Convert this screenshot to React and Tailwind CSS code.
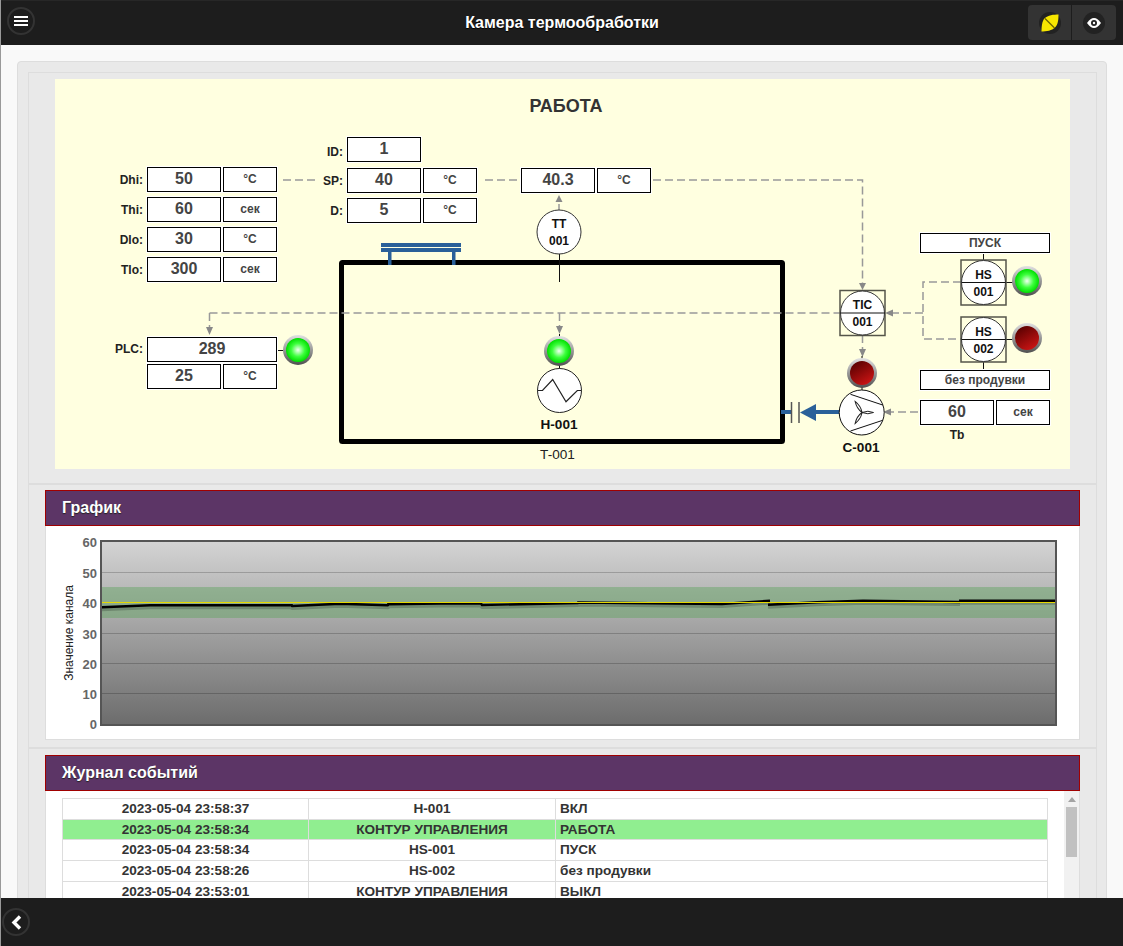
// App.jsx
import React from "react";

const EVENTS = [
  ["2023-05-04 23:58:37", "H-001", "ВКЛ", false],
  ["2023-05-04 23:58:34", "КОНТУР УПРАВЛЕНИЯ", "РАБОТА", true],
  ["2023-05-04 23:58:34", "HS-001", "ПУСК", false],
  ["2023-05-04 23:58:26", "HS-002", "без продувки", false],
  ["2023-05-04 23:53:01", "КОНТУР УПРАВЛЕНИЯ", "ВЫКЛ", false],
];

const Value = ({ children, className = "w-[74px]" }) => (
  <div className={`${className} h-[25px] shrink-0 bg-white border border-black shadow-[0_0_0_1px_#fff] flex items-center justify-center pb-[1px] text-[16px] font-bold text-[#444]`}>
    {children}
  </div>
);

const Unit = ({ children }) => (
  <div className="w-[54px] h-[25px] shrink-0 bg-white border border-black shadow-[0_0_0_1px_#fff] flex items-center justify-center pb-[1px] text-[12px] font-bold text-[#444]">
    {children}
  </div>
);

const Label = ({ children, className = "" }) => (
  <div className={`w-[40px] mr-[2px] text-right text-[12px] font-bold text-[#222] ${className}`}>{children}</div>
);

const Row = ({ label, value, unit, className = "", labelClass = "" }) => (
  <div className={`flex items-center gap-[2px] ${className}`}>
    <Label className={labelClass}>{label}</Label>
    <Value>{value}</Value>
    {unit && <Unit>{unit}</Unit>}
  </div>
);

const Led = ({ x, y, on }) => (
  <g>
    <circle cx={x} cy={y} r="15" fill="url(#ledRing)" />
    <circle cx={x} cy={y} r="12" fill={on ? "url(#ledGreen)" : "url(#ledRed)"} />
  </g>
);

const Instrument = ({ x, y, top, bottom, split, boxed }) => (
  <g>
    {boxed && <rect x={x - 22.5} y={y - 22.5} width="45" height="45" fill="none" stroke="#55554a" strokeWidth="1.5" />}
    <circle cx={x} cy={y} r="22" fill="#fff" stroke="#333" strokeWidth="1" />
    {split && <line x1={x - 22} x2={x + 22} y1={y} y2={y} stroke="#111" strokeWidth="1" />}
    <text x={x} y={y - 4} textAnchor="middle" fontSize="12" fontWeight="700" fill="#111">{top}</text>
    <text x={x} y={y + 13} textAnchor="middle" fontSize="12" fontWeight="700" fill="#111">{bottom}</text>
  </g>
);

// схема задаётся в координатах страницы через viewBox
const SchemeLines = () => (
  <svg viewBox="55 79 1015 390" className="absolute inset-0 w-[1015px] h-[390px]">
    <defs>
      <linearGradient id="ledRing" x1="0" y1="0" x2="0" y2="1">
        <stop offset="0" stopColor="#e2e2e2" />
        <stop offset="1" stopColor="#4f4f4f" />
      </linearGradient>
      <radialGradient id="ledGreen">
        <stop offset="0" stopColor="#f2fff2" />
        <stop offset="0.55" stopColor="#3dff3d" />
        <stop offset="1" stopColor="#00dd00" />
      </radialGradient>
      <linearGradient id="ledRed" x1="0.2" y1="0" x2="0.8" y2="1">
        <stop offset="0" stopColor="#560000" />
        <stop offset="1" stopColor="#d01515" />
      </linearGradient>
    </defs>

    <rect x="341.5" y="262.5" width="441" height="179" rx="1" fill="none" stroke="#000" strokeWidth="5" />

    <g fill="#2a6099">
      <rect x="381" y="243" width="80" height="4" />
      <rect x="381" y="248" width="80" height="4" />
      <rect x="388" y="252" width="3.5" height="13" />
      <rect x="452" y="252" width="3.5" height="13" />
      <rect x="781" y="410" width="10" height="4" />
      <rect x="812" y="410" width="28" height="4" />
      <polygon points="800,412.5 816,404 816,421" />
    </g>
    <g stroke="#555" strokeWidth="1.5">
      <line x1="791.5" x2="791.5" y1="402" y2="423" />
      <line x1="799" x2="799" y1="402" y2="423" />
    </g>

    <g fill="none" stroke="#999" strokeWidth="1.5" strokeDasharray="8 4">
      <path d="M283 180H315" />
      <path d="M485 180H520" />
      <path d="M653 180H862.5V284" />
      <path d="M209.5 313H840" />
      <path d="M209.5 313V328" />
      <path d="M559.5 313V328" />
      <path d="M559 212V200" />
      <path d="M961 282H923V339H961" />
      <path d="M923 313H892" />
      <path d="M862.5 335V350" />
      <path d="M918 412H890" />
    </g>
    <g fill="#888">
      <polygon points="209.5,335 206,327 213,327" />
      <polygon points="559.5,334 556,326 563,326" />
      <polygon points="559,195 555.5,202 562.5,202" />
      <polygon points="862.5,290 859,283 866,283" />
      <polygon points="885,313 893,309.5 893,316.5" />
      <polygon points="862.5,357 859,349 866,349" />
      <polygon points="883,412 891,408.5 891,415.5" />
    </g>

    <g stroke="#111" strokeWidth="1">
      <line x1="559.5" x2="559.5" y1="254" y2="282" />
      <line x1="559.5" x2="559.5" y1="334" y2="340" />
      <line x1="559.5" x2="559.5" y1="364" y2="370" />
      <line x1="277" x2="284" y1="350.5" y2="350.5" />
      <line x1="1005" x2="1013" y1="282.5" y2="282.5" />
      <line x1="1005" x2="1013" y1="339.5" y2="339.5" />
      <line x1="862" x2="862" y1="356" y2="360" />
      <line x1="862" x2="862" y1="386" y2="391" />
      <line x1="983.5" x2="983.5" y1="253" y2="260" />
      <line x1="983.5" x2="983.5" y1="362" y2="370" />
    </g>

    <Instrument x={559} y={232} top="TT" bottom="001" />
    <Instrument x={862.5} y={313} top="TIC" bottom="001" split boxed />
    <Instrument x={983.5} y={282.5} top="HS" bottom="001" split boxed />
    <Instrument x={983.5} y={339.5} top="HS" bottom="002" split boxed />

    <Led x={298} y={350} on />
    <Led x={559} y={351} on />
    <Led x={1027} y={281} on />
    <Led x={1027} y={338} />
    <Led x={862} y={373} />

    {/* нагреватель */}
    <circle cx="559.5" cy="390.5" r="22" fill="#fff" stroke="#222" strokeWidth="1" />
    <polyline points="537.5,390.5 542.5,390.5 552.7,379.5 566,401.7 577.3,390.5 581.5,390.5" fill="none" stroke="#222" strokeWidth="1.2" />

    {/* компрессор */}
    <circle cx="861.7" cy="412.5" r="22.5" fill="#fff" stroke="#111" strokeWidth="1" />
    <line x1="850.5" y1="394.3" x2="882.7" y2="405" stroke="#111" strokeWidth="1" />
    <line x1="850.5" y1="431" x2="882.7" y2="420.3" stroke="#111" strokeWidth="1" />
    <g fill="#fff" stroke="#222" strokeWidth="1" transform="translate(862 412.5)">
      <path d="M0 0Q6 -2.5 11.5 0Q6 2.5 0 0Z" />
      <path d="M0 0Q6 -2.5 13 0Q6 2.5 0 0Z" transform="rotate(-122)" />
      <path d="M0 0Q6 -2.5 13 0Q6 2.5 0 0Z" transform="rotate(122)" />
    </g>

    <text x="559" y="429" textAnchor="middle" fontSize="13.6" fontWeight="700" fill="#111">H-001</text>
    <text x="557.5" y="459" textAnchor="middle" fontSize="13.6" fill="#222">T-001</text>
    <text x="861" y="452" textAnchor="middle" fontSize="13.6" fontWeight="700" fill="#111">C-001</text>
    <text x="957" y="439" textAnchor="middle" fontSize="12" fontWeight="700" fill="#222">Tb</text>
  </svg>
);

const Scheme = () => (
  <div className="relative w-[1015px] h-[390px] bg-[#ffffe0]">
    <SchemeLines />
    <div className="absolute left-0 right-0 top-[17px] pl-[7px] text-center text-[18px] leading-[20px] font-bold text-[#333]">РАБОТА</div>

    <div className="absolute left-[48px] top-[88px] flex flex-col gap-[5px]">
      <Row label="Dhi:" value="50" unit="°C" />
      <Row label="Thi:" value="60" unit="сек" />
      <Row label="Dlo:" value="30" unit="°C" />
      <Row label="Tlo:" value="300" unit="сек" />
    </div>

    <div className="absolute left-[248px] top-[58px] flex flex-col">
      <Row label="ID:" value="1" labelClass="pt-[4px]" />
      <Row label="SP:" value="40" unit="°C" className="mt-[6px]" />
      <Row label="D:" value="5" unit="°C" className="mt-[5px]" />
    </div>

    <div className="absolute left-[466px] top-[89px] flex gap-[2px]">
      <Value>40.3</Value>
      <Unit>°C</Unit>
    </div>

    <div className="absolute left-[48px] top-[258px] flex flex-col gap-[2px]">
      <div className="flex items-center">
        <Label className="mr-[4px] pb-[2px]">PLC:</Label>
        <Value className="w-[130px]">289</Value>
      </div>
      <div className="flex gap-[2px] ml-[44px]">
        <Value>25</Value>
        <Unit>°C</Unit>
      </div>
    </div>

    <div className="absolute left-[865px] top-[154px] w-[130px] h-[20px] bg-white border border-black shadow-[0_0_0_1px_#fff] flex items-center justify-center text-[12px] font-bold text-[#444]">ПУСК</div>
    <div className="absolute left-[865px] top-[291px] w-[130px] h-[20px] bg-white border border-black shadow-[0_0_0_1px_#fff] flex items-center justify-center text-[12px] font-bold text-[#444]">без продувки</div>
    <div className="absolute left-[865px] top-[321px] flex gap-[2px]">
      <Value>60</Value>
      <Unit>сек</Unit>
    </div>
  </div>
);

const PanelHeader = ({ children }) => (
  <div className="h-[36px] bg-[#5c3566] border border-[#a00000] pl-[16px] flex items-center text-[16px] font-bold text-white [text-shadow:0_1px_1px_#222]">
    {children}
  </div>
);

const GRID = [572, 602, 633, 663, 693];

const TICKS = [
  [60, 542],
  [50, 573],
  [40, 603],
  [30, 634],
  [20, 664],
  [10, 694],
  [0, 724],
];

const LINE = "M102 607.3L150 605.3L292 605.3L292 606L340 603.7L388 605.3L388 604.3L440 603.5L481 603.5L482 605L578 603L578 602.5L722 604L770 600.7M768 604.7L817 602.3L863 600.7L960 602M959 600.7L1055 600.7";

const Chart = () => (
  <div className="h-[214px] bg-white border border-[#ddd] border-t-0">
    <svg viewBox="46 526 1033 213" className="block w-[1033px] h-[213px]">
      <defs>
        <linearGradient id="plotBg" x1="0" y1="0" x2="0" y2="1">
          <stop offset="0" stopColor="#d4d4d4" />
          <stop offset="1" stopColor="#6c6c6c" />
        </linearGradient>
      </defs>
      <rect x="101" y="541" width="955" height="184" fill="url(#plotBg)" />
      {GRID.map((y) => (
        <line key={y} x1="101" x2="1056" y1={y + 0.5} y2={y + 0.5} stroke="#000" strokeOpacity="0.2" strokeWidth="1" />
      ))}
      <rect x="101" y="587" width="955" height="31" fill="#5fa35f" fillOpacity="0.45" />
      <path d={LINE} transform="translate(0 2)" fill="none" stroke="#000" strokeOpacity="0.2" strokeWidth="4" strokeLinejoin="round" />
      <path d={LINE} fill="none" stroke="#000" strokeWidth="2.4" strokeLinejoin="round" />
      <line x1="101" x2="1056" y1="602.5" y2="602.5" stroke="#e6d800" strokeWidth="1" />
      <rect x="101" y="541" width="955" height="184" fill="none" stroke="#555" strokeWidth="2" />
      {TICKS.map(([v, y]) => (
        <text key={v} x="97" y={y + 5} textAnchor="end" fontSize="13" fontWeight="700" fill="#666">{v}</text>
      ))}
      <text transform="translate(73 633) rotate(-90)" textAnchor="middle" fontSize="12" fill="#222">Значение канала</text>
    </svg>
  </div>
);

const EventLog = () => (
  <div className="flex bg-white border-x border-[#ddd] h-[120px]">
    <div className="flex-1 pl-[16px] pr-[16px] pt-[7px]">
      <table className="w-[986px] table-fixed border-collapse text-[13.6px] leading-[18px] font-bold text-[#333]">
        <tbody>
          {EVENTS.map(([time, tag, state, active], i) => (
            <tr key={i} className={active ? "bg-[#90ee90] h-[20px]" : "bg-white h-[21px]"}>
              <td className="w-[246px] p-0 border border-[#ddd] text-center">{time}</td>
              <td className="w-[247px] p-0 border border-[#ddd] text-center">{tag}</td>
              <td className="p-0 pl-[4px] border border-[#ddd]">{state}</td>
            </tr>
          ))}
        </tbody>
      </table>
    </div>
    <div className="w-[15px] shrink-0 bg-[#f1f1f1] flex flex-col items-center pt-[6px]">
      <svg width="8" height="5" viewBox="0 0 8 5" className="block">
        <polygon points="4,0 8,5 0,5" fill="#a3a3a3" />
      </svg>
      <div className="mt-[5px] w-[11px] h-[50px] bg-[#c1c1c1]" />
    </div>
  </div>
);

const App = () => (
  <div className="h-screen w-[1123px] overflow-hidden flex flex-col border-l border-[#999] bg-[#f9f9f9] font-['Liberation_Sans',Arial,sans-serif]">
    <header className="relative h-[45px] shrink-0 bg-[#1d1d1d] border-t border-[#272727] flex items-center justify-center pb-[1px] text-[16px] font-bold text-white [text-shadow:0_1px_1px_#000]">
      <button className="absolute left-[6px] top-[6px] w-[28px] h-[28px] rounded-full border-2 border-[#333] flex flex-col items-center justify-center gap-[2px]">
        <span className="block w-[14px] h-[2px] bg-white" />
        <span className="block w-[14px] h-[2px] bg-white" />
        <span className="block w-[14px] h-[2px] bg-white" />
      </button>
      Камера термообработки
      <div className="absolute right-[7px] top-[4px] h-[35px] flex gap-px">
        <div className="w-[43px] bg-[#333] rounded-l-[4px] flex items-center justify-center">
          <div className="w-[22px] h-[22px] rounded-full bg-[#222] flex items-center justify-center">
            <svg width="20" height="20" viewBox="0 0 20 20" className="shrink-0">
              <path d="M18.5 1.5C13.5 1.5 8 2 4.5 5.5C2 8 1.5 14 1.5 18.5C6.5 18.5 12 17.5 15 14.5C18 11.5 18.5 6.5 18.5 1.5Z" fill="#f7e600" />
              <line x1="5" y1="5.5" x2="14.5" y2="15" stroke="#6b6400" strokeWidth="1.2" />
            </svg>
          </div>
        </div>
        <div className="w-[44px] bg-[#333] rounded-r-[4px] flex items-center justify-center">
          <div className="w-[22px] h-[22px] rounded-full bg-[#222] flex items-center justify-center">
            <svg width="14" height="10" viewBox="0 0 14 10">
              <path d="M0 5C2.5 1.5 4.5 0 7 0C9.5 0 11.5 1.5 14 5C11.5 8.5 9.5 10 7 10C4.5 10 2.5 8.5 0 5Z" fill="#fff" />
              <circle cx="7" cy="5" r="3" fill="#222" />
              <circle cx="7" cy="5" r="1.2" fill="#fff" />
            </svg>
          </div>
        </div>
      </div>
    </header>

    <main className="flex-1 min-h-0 overflow-hidden pt-[16px] pl-[16px]">
      <div className="w-[1090px] bg-[#e9e9e9] border border-[#ddd] rounded-t-[4px] pt-[10px] pl-[10px] pr-[9px]">
        <div className="border border-[#ddd] border-b-0">
          <section className="px-[26px] pt-[6px] pb-[14px]">
            <Scheme />
          </section>
          <section className="border-t-2 border-[#ddd] px-[16px] pt-[5px] pb-[7px]">
            <PanelHeader>График</PanelHeader>
            <Chart />
          </section>
          <section className="border-t-2 border-[#ddd] px-[16px] pt-[6px]">
            <PanelHeader>Журнал событий</PanelHeader>
            <EventLog />
          </section>
        </div>
      </div>
    </main>

    <footer className="relative h-[48px] shrink-0 bg-[#1d1d1d]">
      <button className="absolute left-[1px] top-[10px] w-[28px] h-[28px] rounded-full border-2 border-[#333] flex items-center justify-center">
        <svg width="13" height="15" viewBox="0 0 13 15">
          <polyline points="10,1.5 4,7.5 10,13.5" fill="none" stroke="#fff" strokeWidth="3.4" />
        </svg>
      </button>
    </footer>
  </div>
);

export default App;
